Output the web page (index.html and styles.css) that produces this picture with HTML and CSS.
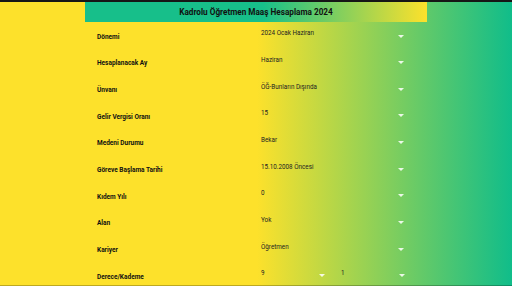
FILE: index.html
```html
<!DOCTYPE html>
<html lang="tr">
<head>
  <meta charset="UTF-8" />
  <meta name="viewport" content="width=device-width, initial-scale=1.0" />
  <title>Kadrolu Öğretmen Maaş Hesaplama 2024</title>
  <link rel="stylesheet" href="styles.css">
</head>
<body>
  <div class="page">
    <h1 class="title">Kadrolu Öğretmen Maaş Hesaplama 2024</h1>

    <div class="row">
      <span class="label">Dönemi</span>
      <div class="select"><span>2024 Ocak Haziran</span><i class="arrow"></i></div>
    </div>
    <div class="row">
      <span class="label">Hesaplanacak Ay</span>
      <div class="select"><span>Haziran</span><i class="arrow"></i></div>
    </div>
    <div class="row">
      <span class="label">Ünvanı</span>
      <div class="select"><span>ÖĞ-Bunların Dışında</span><i class="arrow"></i></div>
    </div>
    <div class="row">
      <span class="label">Gelir Vergisi Oranı</span>
      <div class="select"><span>15</span><i class="arrow"></i></div>
    </div>
    <div class="row">
      <span class="label">Medeni Durumu</span>
      <div class="select"><span>Bekar</span><i class="arrow"></i></div>
    </div>
    <div class="row">
      <span class="label">Göreve Başlama Tarihi</span>
      <div class="select"><span>15.10.2008 Öncesi</span><i class="arrow"></i></div>
    </div>
    <div class="row">
      <span class="label">Kıdem Yılı</span>
      <div class="select"><span>0</span><i class="arrow"></i></div>
    </div>
    <div class="row">
      <span class="label">Alan</span>
      <div class="select"><span>Yok</span><i class="arrow"></i></div>
    </div>
    <div class="row">
      <span class="label">Kariyer</span>
      <div class="select"><span>Öğretmen</span><i class="arrow"></i></div>
    </div>
    <div class="row">
      <span class="label">Derece/Kademe</span>
      <div class="pair">
        <div class="select small"><span>9</span><i class="arrow"></i></div>
        <div class="select small"><span>1</span><i class="arrow"></i></div>
      </div>
    </div>
  </div>
</body>
</html>
```

FILE: styles.css
```css
body {
  margin: 0;
  font-family: Roboto, "Noto Sans", sans-serif;
  background: #fde12b;
  overflow: hidden;
}

.page {
  height: 286px;
  box-sizing: border-box;
  border-top: 2px solid #161616;
  background: linear-gradient(90deg, #fde12b 0, #fde12b 50.2%, #10bd8a 100%);
  box-shadow: inset 0 -1px rgba(0, 0, 0, 0.25);
  overflow: hidden;
}

.title {
  margin: 0 0 0 85px;
  width: 342px;
  height: 20px;
  line-height: 20px;
  text-align: center;
  font-size: 8.2px;
  font-weight: bold;
  color: #111;
  background: linear-gradient(90deg, #17bf8a 0, #17bf8a 52%, #fde12b 100%);
}

.row {
  display: flex;
  height: 26.667px;
  margin-left: 97px;
}

.label {
  width: 164px;
  padding-top: 10.7px;
  line-height: 8px;
  font-size: 6.5px;
  font-weight: bold;
  color: #111;
}

.select {
  width: 143px;
  display: flex;
  justify-content: space-between;
  font-size: 6.3px;
  line-height: 8px;
  color: #222;
}

.select span {
  padding-top: 7.3px;
}

.arrow {
  width: 0;
  height: 0;
  margin-top: 12.5px;
  border-left: 3px solid transparent;
  border-right: 3px solid transparent;
  border-top: 3px solid rgba(255, 255, 255, 0.85);
}

.pair {
  display: flex;
  gap: 16px;
}

.select.small {
  width: 64px;
}
```
